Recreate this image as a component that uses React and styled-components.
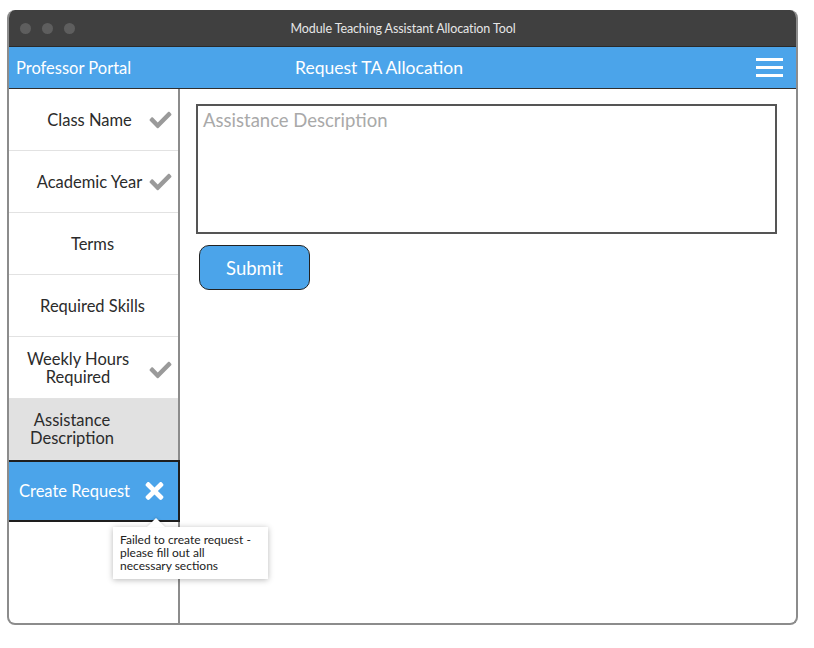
import React from "react";
import styled, { createGlobalStyle } from "styled-components";
import { FaCheck, FaTimes } from "react-icons/fa";

const Global = createGlobalStyle`
  html, body { margin: 0; padding: 0; background: #fff; }
  body { font-family: Lato, "Open Sans", sans-serif; }
  * { box-sizing: border-box; }
`;

const Window = styled.div`
  margin: 10px 0 0 7px;
  width: 791px;
  height: 615px;
  border: 2px solid #8c8c8c;
  border-top: none;
  border-radius: 8px;
  overflow: hidden;
  display: flex;
  flex-direction: column;
`;

const TitleBar = styled.div`
  height: 36px;
  background: #404040;
  display: grid;
  grid-template-columns: 1fr auto 1fr;
  align-items: center;
  padding: 0 12px 0 13px;
  margin: 0 -2px;
`;

const Dots = styled.div`
  display: flex;
  gap: 11px;
`;

const Dot = styled.span`
  width: 11px;
  height: 11px;
  border-radius: 50%;
  background: #5e5e5e;
`;

const TitleText = styled.div`
  color: #e6e6e6;
  font-size: 12.5px;
  letter-spacing: -0.1px;
`;

const NavBar = styled.div`
  height: 43px;
  background: #4ba4ea;
  border-top: 1px solid #2a2a2a;
  border-bottom: 1px solid #2f2f2f;
  display: grid;
  grid-template-columns: 1fr auto 1fr;
  align-items: center;
  padding: 0 13px 0 7px;
  color: #fff;
`;

const Portal = styled.div`
  font-size: 16.5px;
`;

const PageTitle = styled.div`
  font-size: 17.5px;
  margin-right: 41px;
`;

const Burger = styled.div`
  justify-self: end;
  width: 27px;
  display: flex;
  flex-direction: column;
  gap: 5px;
  & > span {
    height: 3px;
    background: #fff;
    display: block;
  }
`;

const Body = styled.div`
  flex: 1;
  display: flex;
  min-height: 0;
`;

const Sidebar = styled.div`
  width: 171px;
  border-right: 2px solid #8c8c8c;
  display: flex;
  flex-direction: column;
`;

const Row = styled.div`
  position: relative;
  height: ${(p) => p.$h || 62}px;
  display: flex;
  align-items: center;
  justify-content: ${(p) => (p.$left ? "flex-start" : "center")};
  padding: ${(p) => (p.$left ? "0 0 0 10px" : `0 ${p.$pr || 0}px 0 0`)};
  background: ${(p) => (p.$bg ? p.$bg : "#fff")};
  border-bottom: 1px solid #e2e2e2;
  color: #2b2b2b;
  font-size: 16.5px;
  line-height: 18px;
  text-align: center;
`;

const ActiveRow = styled(Row)`
  background: #4ba4ea;
  color: #fff;
  border: 2px solid #1e1e1e;
  margin-left: -2px;
  margin-right: -2px;
  height: 62px;
`;

const Check = styled(FaCheck)`
  position: absolute;
  right: 6px;
  top: 50%;
  margin-top: ${(p) => -11 + (p.$dy || 0)}px;
  width: 23px;
  height: 22px;
  color: #9a9a9a;
`;

const Cross = styled(FaTimes)`
  position: absolute;
  left: 136px;
  top: 50%;
  margin-top: -13px;
  width: 19px;
  height: 26px;
  color: #fff;
`;

const Tooltip = styled.div`
  position: absolute;
  left: 104px;
  top: 65px;
  width: 155px;
  padding: 6px 6px 7px 7px;
  background: #fff;
  color: #222;
  font-size: 12px;
  line-height: 13px;
  text-align: left;
  box-shadow: 0 1px 6px rgba(0, 0, 0, 0.28);
  z-index: 2;
  &::before {
    content: "";
    position: absolute;
    left: 34px;
    top: -9px;
    border-left: 9px solid transparent;
    border-right: 9px solid transparent;
    border-bottom: 9px solid #fff;
    filter: drop-shadow(0 -1px 1px rgba(0, 0, 0, 0.15));
  }
`;

const Content = styled.div`
  flex: 1;
  padding: 15px 0 0 16px;
  display: flex;
  flex-direction: column;
  align-items: flex-start;
`;

const TextArea = styled.textarea`
  width: 581px;
  height: 130px;
  border: 2px solid #555;
  resize: none;
  padding: 3px 5px;
  font-family: Lato, "Open Sans", sans-serif;
  font-size: 18.5px;
  outline: none;
  &::placeholder {
    color: #a9a9a9;
  }
`;

const Submit = styled.button`
  margin: 11px 0 0 3px;
  width: 111px;
  height: 45px;
  background: #4ba4ea;
  border: 1.5px solid #222;
  border-radius: 10px;
  color: #fff;
  font-family: Lato, "Open Sans", sans-serif;
  font-size: 18.5px;
`;

const Filler = styled.div`
  flex: 1;
`;

export default function App() {
  return (
    <>
      <Global />
      <Window>
        <TitleBar>
          <Dots>
            <Dot />
            <Dot />
            <Dot />
          </Dots>
          <TitleText>Module Teaching Assistant Allocation Tool</TitleText>
          <span />
        </TitleBar>
        <NavBar>
          <Portal>Professor Portal</Portal>
          <PageTitle>Request TA Allocation</PageTitle>
          <Burger>
            <span />
            <span />
            <span />
          </Burger>
        </NavBar>
        <Body>
          <Sidebar>
            <Row $pr={8}>
              Class Name
              <Check />
            </Row>
            <Row $pr={8}>
              Academic Year
              <Check />
            </Row>
            <Row $pr={2}>Terms</Row>
            <Row $pr={2}>Required Skills</Row>
            <Row $pr={31}>
              <span>
                Weekly Hours
                <br />
                Required
              </span>
              <Check $dy={2} />
            </Row>
            <Row $pr={43} $bg="#e1e1e1" $h={61}>
              <span>
                Assistance
                <br />
                Description
              </span>
            </Row>
            <ActiveRow $left>
              Create Request
              <Cross />
              <Tooltip>
                Failed to create request -
                <br />
                please fill out all
                <br />
                necessary sections
              </Tooltip>
            </ActiveRow>
            <Filler />
          </Sidebar>
          <Content>
            <TextArea placeholder="Assistance Description" />
            <Submit>Submit</Submit>
          </Content>
        </Body>
      </Window>
    </>
  );
}
